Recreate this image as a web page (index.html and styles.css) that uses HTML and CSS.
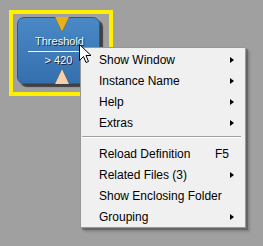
FILE: index.html
```html
<!DOCTYPE html>
<html lang="en">
<head>
    <meta charset="UTF-8">
    <title>Threshold node menu</title>
    <link rel="stylesheet" href="styles.css">
</head>
<body>
    <div class="canvas">
        <div class="selection">
            <div class="node">
                <span class="tri tri-in"></span>
                <div class="node-title">Threshold</div>
                <div class="node-value">&gt; 420</div>
                <span class="tri tri-out"></span>
            </div>
        </div>

        <div class="menu">
            <div class="item"><span class="label">Show Window</span><span class="arrow"></span></div>
            <div class="item"><span class="label">Instance Name</span><span class="arrow"></span></div>
            <div class="item"><span class="label">Help</span><span class="arrow"></span></div>
            <div class="item"><span class="label">Extras</span><span class="arrow"></span></div>
            <div class="separator"></div>
            <div class="item"><span class="label">Reload Definition</span><span class="key">F5</span></div>
            <div class="item"><span class="label">Related Files (3)</span><span class="arrow"></span></div>
            <div class="item"><span class="label">Show Enclosing Folder</span></div>
            <div class="item"><span class="label">Grouping</span><span class="arrow"></span></div>
        </div>

        <svg class="cursor" width="13" height="21" viewBox="0 0 13 21">
            <path d="M0.5 0.5 L0.5 16.5 L4.5 12.5 L7 18.5 L9.5 17.5 L7 11.5 L12 11.5 Z" fill="#ffffff" stroke="#000000" stroke-width="1"/>
        </svg>
    </div>
</body>
</html>
```

FILE: styles.css
```css
:root {
    --canvas: #a0a0a0;
    --select: #fff000;
    --node-top: #4a88c6;
    --node-bottom: #3470ad;
    --menu-bg: #f0f0f0;
    --menu-border: #979797;
    --text: #000000;
}

body {
    margin: 0;
    background-color: var(--canvas);
    font-family: 'Liberation Sans', Arial, sans-serif;
}
.canvas {
    position: relative;
    width: 263px;
    height: 246px;
    padding: 10px 0 0 9px;
    box-sizing: border-box;
}
.selection {
    width: 92px;
    height: 75px;
    border: 4px solid var(--select);
    padding: 3px 0 0 4px;
}
.node {
    position: relative;
    width: 81px;
    height: 65px;
    border: 1px solid #2a5888;
    border-radius: 7px;
    background: linear-gradient(var(--node-top), var(--node-bottom));
    box-shadow: 3px 3px 1px rgba(0, 0, 0, 0.6);
    display: flex;
    flex-direction: column;
    align-items: center;
    color: #f4f6fa;
    font-size: 11px;
    text-shadow: 1px 1px 0 #1c2633;
}
.node-title {
    margin-top: 15px;
    padding: 0 5px 1px 7px;
    border-bottom: 1px solid #ffffff;
    line-height: 17px;
}
.node-value {
    margin-top: 2px;
    line-height: 13px;
}
.tri {
    position: absolute;
    left: 37px;
    width: 0;
    height: 0;
}
.tri-in {
    top: -1px;
    border-left: 7px solid transparent;
    border-right: 7px solid transparent;
    border-top: 15px solid #e6b01e;
    filter: drop-shadow(0 0 0.7px #201500);
}
.tri-out {
    bottom: -1px;
    border-left: 7px solid transparent;
    border-right: 7px solid transparent;
    border-bottom: 15px solid #f6d0aa;
    filter: drop-shadow(0 0 0.7px #201508);
}
.menu {
    position: absolute;
    left: 80px;
    top: 47px;
    width: 164px;
    padding: 1px 0 0;
    background-color: var(--menu-bg);
    border: 1px solid var(--menu-border);
    box-shadow: 2px 2px 1px rgba(0, 0, 0, 0.25), 4px 4px 2px rgba(0, 0, 0, 0.15);
    font-size: 12px;
    color: var(--text);
}
.item {
    display: flex;
    align-items: center;
    height: 21px;
    padding: 0 11px 0 18px;
}
.label {
    flex: 1;
}
.key {
    margin-right: 5px;
}
.arrow {
    width: 0;
    height: 0;
    border-top: 3.5px solid transparent;
    border-bottom: 3.5px solid transparent;
    border-left: 4px solid #000000;
}
.separator {
    margin: 3px 4px 5px 1px;
    border-top: 1px solid #a0a0a0;
    border-bottom: 1px solid #ffffff;
}
.cursor {
    position: absolute;
    left: 79px;
    top: 44px;
}
```
